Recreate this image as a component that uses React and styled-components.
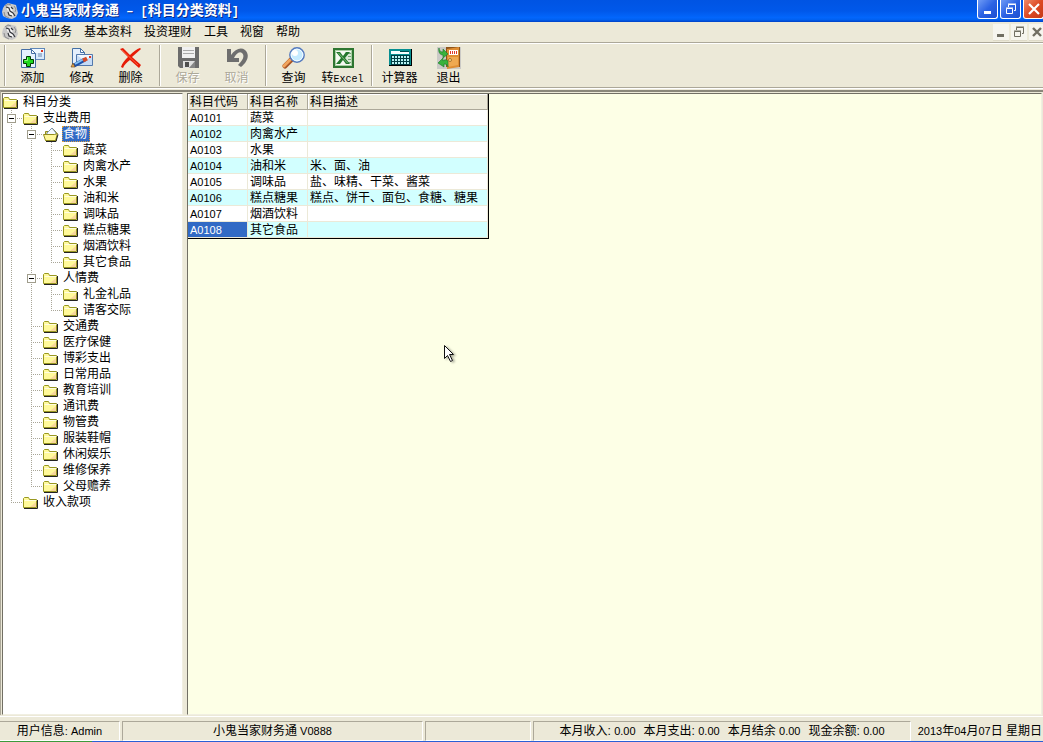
import { useState } from "react";
import styled, { createGlobalStyle, css } from "styled-components";

/* 目录树数据 */
const TREE = {
  name: "科目分类",
  children: [
    {
      name: "支出费用",
      children: [
        {
          name: "食物",
          children: [
            { name: "蔬菜" },
            { name: "肉禽水产" },
            { name: "水果" },
            { name: "油和米" },
            { name: "调味品" },
            { name: "糕点糖果" },
            { name: "烟酒饮料" },
            { name: "其它食品" },
          ],
        },
        {
          name: "人情费",
          children: [{ name: "礼金礼品" }, { name: "请客交际" }],
        },
        { name: "交通费" },
        { name: "医疗保健" },
        { name: "博彩支出" },
        { name: "日常用品" },
        { name: "教育培训" },
        { name: "通讯费" },
        { name: "物管费" },
        { name: "服装鞋帽" },
        { name: "休闲娱乐" },
        { name: "维修保养" },
        { name: "父母赡养" },
      ],
    },
    { name: "收入款项" },
  ],
};

const ROWS = [
  { code: "A0101", name: "蔬菜", desc: "" },
  { code: "A0102", name: "肉禽水产", desc: "" },
  { code: "A0103", name: "水果", desc: "" },
  { code: "A0104", name: "油和米", desc: "米、面、油" },
  { code: "A0105", name: "调味品", desc: "盐、味精、干菜、酱菜" },
  { code: "A0106", name: "糕点糖果", desc: "糕点、饼干、面包、食糖、糖果" },
  { code: "A0107", name: "烟酒饮料", desc: "" },
  { code: "A0108", name: "其它食品", desc: "" },
];

const MENUS = ["记帐业务", "基本资料", "投资理财", "工具", "视窗", "帮助"];

const TOTALS = [
  { label: "本月收入:", value: "0.00" },
  { label: "本月支出:", value: "0.00" },
  { label: "本月结余", value: "0.00" },
  { label: "现金余额:", value: "0.00" },
];

/* 图标 */
function AppIcon() {
  return (
    <svg width="16" height="16" viewBox="0 0 16 16" aria-hidden="true">
      <path d="M3 2l3-2 4 1 4 1 1 4 1 4-2 4-4 2-5-1-4-2-1-4 1-4z" fill="#c9c9c9" />
      <path d="M3 3l3-2 3 1M12 3l2 3-1 3M2 9l1 4 4 2" stroke="#8d8d8d" fill="none" />
      <path d="M5 5l2-2 3 1 1 3-1 1 2 2-1 3-3-1-2-3 1-1-2-1z" fill="#f6f6f6" />
      <path d="M4 4l3 1 1 3 3 2 2 3M9 4l2 2M6 9l1 3 3 1" stroke="#34363c" strokeWidth="1.2" fill="none" />
    </svg>
  );
}

function AddIcon() {
  return (
    <svg width="24" height="22" viewBox="0 0 24 22" aria-hidden="true">
      <rect x="9.500" y="1.500" width="14" height="11" fill="#d8e9fb" stroke="#5f87b8" />
      <path d="M10 2h13v4H10z" fill="#eff7ff" />
      <rect x="20" y="3" width="2" height="2" fill="#d8321e" />
      <path d="M17 7h4M17 9h4" stroke="#6d88ae" />
      <path d="M.500 2.500h10l4 4v14H.500z" fill="#e6f1fd" stroke="#466fa6" />
      <path d="M10.500 2.500v4h4z" fill="#fff" stroke="#466fa6" />
      <path d="M5.500 9.500h4v3h3v4h-3v3h-4v-3h-3v-4h3z" fill="#1fd81f" stroke="#003c00" />
      <path d="M6.500 10.500v3h-3" stroke="#8dff7c" fill="none" />
    </svg>
  );
}

function EditIcon() {
  return (
    <svg width="24" height="22" viewBox="0 0 24 22" aria-hidden="true">
      <path d="M2.500 1.500h8l4 4v12h-12z" fill="#e4effc" stroke="#4671a6" />
      <path d="M10.500 1.500v4h4z" fill="#fff" stroke="#4671a6" />
      <path d="M6.500 7.500h16v11h-16z" fill="#c6dcf6" stroke="#5379ac" />
      <path d="M7 8h15l-7 6z" fill="#f1f8ff" />
      <rect x="19" y="9" width="2" height="2" fill="#e2361f" />
      <path d="M4 18.500l11-6" stroke="#1e50a8" strokeWidth="4" />
      <path d="M5 17l9-5" stroke="#82c2f4" strokeWidth="2" />
      <path d="M13 13.500l4-2" stroke="#d44a28" strokeWidth="4" />
      <path d="M1 20l2-4 2 4z" fill="#edae4d" stroke="#5d371a" strokeWidth=".6" />
    </svg>
  );
}

function DeleteIcon() {
  return (
    <svg width="24" height="22" viewBox="0 0 24 22" aria-hidden="true">
      <path d="M1 2l3-1 7 7c3-3 7-6 10-7l1 1-9 8 9 8-2 3-9-8c-3 2-6 5-7 8l-2-1c1-4 4-7 7-10z" fill="#e61c08" />
      <path d="M3 3l16 15" stroke="#ff5a37" />
    </svg>
  );
}

function SaveIcon() {
  return (
    <svg width="24" height="22" viewBox="0 0 24 22" aria-hidden="true">
      <path d="M2 0h21v21H4l-2-2z" fill="#6c6c6c" />
      <rect x="6" y="0" width="13" height="11" fill="#f1f1f1" />
      <path d="M7 3.500h11M7 6.500h11" stroke="#aaa" />
      <rect x="7" y="14" width="12" height="7" fill="#e0e0e0" />
      <path d="M9 15h4v5H9z" fill="#4e4e4e" />
      <path d="M19 14v7h-6z" fill="#858585" />
    </svg>
  );
}

function UndoIcon() {
  return (
    <svg width="24" height="22" viewBox="0 0 24 22" aria-hidden="true">
      <path d="M2 2h4v6c4-6 10-8 14-5 5 4 3 12-4 17l-3-2c5-5 7-9 4-12-3-2-6 1-8 5h5v4H2z" fill="#6e6e6e" />
    </svg>
  );
}

function SearchIcon() {
  return (
    <svg width="24" height="22" viewBox="0 0 24 22" aria-hidden="true">
      <path d="M9 13l-6 6" stroke="#a65325" strokeWidth="5" strokeLinecap="round" />
      <path d="M8 13l-6 6" stroke="#f1a45d" strokeWidth="3" strokeLinecap="round" />
      <circle cx="15" cy="8" r="7.200" fill="#c5ebff" stroke="#5579bd" strokeWidth="1.400" />
      <circle cx="15" cy="8" r="5.800" fill="none" stroke="#f2fbff" />
      <ellipse cx="13" cy="6" rx="3" ry="3" fill="#fff" />
    </svg>
  );
}

function ExcelIcon() {
  return (
    <svg width="24" height="22" viewBox="0 0 24 22" aria-hidden="true">
      <rect x="3" y="2" width="19" height="18" fill="#f5faf2" stroke="#2e7631" strokeWidth="2" />
      <rect x="4.500" y="3.500" width="16" height="15" fill="none" stroke="#a9cfa4" />
      <path d="M14 5h6v12h-6z" fill="#dbe9d7" />
      <path d="M17 6.500h3M17 9.500h3M17 12.500h3M17 15.500h3" stroke="#75a677" />
      <path d="M5 5h4l3 4 3-4h4l-5 6 5 6h-4l-3-4-3 4H5l5-6z" fill="#22772c" />
      <path d="M7 6h1l9 10h-1z" fill="#84be7e" />
    </svg>
  );
}

function CalcIcon() {
  const keys = [];
  for (let r = 0; r < 3; r++) {
    for (let c = 0; c < 6; c++) {
      keys.push(<rect key={`${r}-${c}`} x={4 + c * 3} y={9 + r * 3} width="2" height="2" fill="#b8f4f4" />);
    }
  }
  return (
    <svg width="24" height="22" viewBox="0 0 24 22" aria-hidden="true">
      <rect x="1" y="2" width="23" height="17" fill="#000" />
      <rect x="1" y="2" width="22" height="16" fill="#078f91" />
      <rect x="3" y="4" width="18" height="3" fill="#f6ffff" />
      <rect x="12" y="4" width="9" height="1" fill="#014c4d" />
      <rect x="3" y="8" width="19" height="10" fill="#003d42" />
      {keys}
    </svg>
  );
}

function ExitIcon() {
  return (
    <svg width="24" height="22" viewBox="0 0 24 22" aria-hidden="true">
      <rect width="24" height="22" fill="#cbcac6" />
      <path d="M9 0h14v20H9z" fill="#8e531b" />
      <path d="M10 2l12-2v20l-12 2z" fill="#df8e34" />
      <path d="M11 10h10v8l-10 2z" fill="#efa951" />
      <rect x="12" y="3" width="9" height="5" fill="#fff" />
      <path d="M13 5.500h7" stroke="#df3b2d" strokeWidth="3" strokeDasharray="1 1" />
      <circle cx="13" cy="13" r="1.500" fill="#ffe182" stroke="#754012" strokeWidth=".6" />
      <path d="M2 1c0 3 2 4 4 4V2l5 5-5 4V8C3 8 1 5 2 1z" fill="#39b23c" stroke="#187526" strokeWidth=".6" />
      <path d="M11 14c-2-2-4-1-5 0v-3l-5 5 6 4v-3c2 0 4 1 4 3z" fill="#39b23c" stroke="#187526" strokeWidth=".6" />
    </svg>
  );
}

function FolderIcon({ open }) {
  return (
    <svg width="16" height="16" viewBox="0 0 16 16" aria-hidden="true">
      {open ? (
        <>
          <path d="M2.500 14.500v-9h3l4-3 4 4v8z" fill="#e5de72" stroke="#8f8a20" />
          <path d="M4 7l5-5 4 5v2H4z" fill="#f4f8ff" stroke="#6683aa" strokeWidth=".8" />
          <path d="M.500 8.500h11l3-1-2 7h-10z" fill="#fff79a" stroke="#918b1c" />
          <path d="M3 15.500h10l2-7" stroke="#222" fill="none" />
        </>
      ) : (
        <>
          <path d="M.500 13.500v-9l1-1h4l1 2h7v8z" fill="#fff99a" stroke="#999821" />
          <path d="M1.500 6.500h12" stroke="#fffde0" />
          <path d="M7 13l6-5v5z" fill="#f8d79b" />
          <path d="M1 14.500h13.500V6" stroke="#222" fill="none" />
        </>
      )}
    </svg>
  );
}

function MinIcon() {
  return (
    <svg width="14" height="14" viewBox="0 0 14 14" aria-hidden="true">
      <path d="M3 10.500h7" stroke="currentColor" strokeWidth="3" />
    </svg>
  );
}

function RestoreIcon() {
  return (
    <svg width="14" height="14" viewBox="0 0 14 14" aria-hidden="true">
      <path d="M4.500 5V2.500h7v6H10M4 2h8" stroke="currentColor" fill="none" />
      <path d="M2.500 6.500h6v5h-6zM2 6h7" stroke="currentColor" fill="none" />
    </svg>
  );
}

function CloseIcon({ small }) {
  return (
    <svg width="14" height="14" viewBox="0 0 14 14" aria-hidden="true">
      {small ? (
        <path d="M3 3l8 8M11 3l-8 8" stroke="currentColor" strokeWidth="2.400" />
      ) : (
        <path d="M2 2l10 10M12 2L2 12" stroke="currentColor" strokeWidth="2.200" />
      )}
    </svg>
  );
}

const TOOL_GROUPS = [
  [
    { label: "添加", icon: <AddIcon /> },
    { label: "修改", icon: <EditIcon /> },
    { label: "删除", icon: <DeleteIcon /> },
  ],
  [
    { label: "保存", icon: <SaveIcon />, disabled: true },
    { label: "取消", icon: <UndoIcon />, disabled: true },
  ],
  [
    { label: "查询", icon: <SearchIcon /> },
    { label: "转", latin: "Excel", icon: <ExcelIcon /> },
  ],
  [
    { label: "计算器", icon: <CalcIcon /> },
    { label: "退出", icon: <ExitIcon /> },
  ],
];

/*
TreeNode 组件
guides: 每一级祖先是否还有后续节点 (决定是否画竖线)
*/
function TreeNode({ node, guides, last, root, selected, onSelect }) {
  const [open, setOpen] = useState(true);
  const hasChildren = Boolean(node.children);
  const isSelected = selected === node.name;

  return (
    <li>
      <TreeRow>
        {guides.map((more, i) => (
          <Guide key={i} $kind={more ? "line" : "blank"} />
        ))}
        {!root && (
          <Guide $kind={last ? "end" : "tee"}>
            {hasChildren && (
              <Expander
                type="button"
                aria-label={node.name}
                aria-expanded={open}
                $open={open}
                onClick={() => setOpen(!open)}
              />
            )}
          </Guide>
        )}
        <FolderCell>
          <FolderIcon open={isSelected} />
        </FolderCell>
        <NodeLabel type="button" $selected={isSelected} onClick={() => onSelect(node.name)}>
          {node.name}
        </NodeLabel>
      </TreeRow>

      {hasChildren && open && (
        <TreeList>
          {node.children.map((child, i) => (
            <TreeNode
              key={child.name}
              node={child}
              guides={root ? [] : [...guides, !last]}
              last={i === node.children.length - 1}
              selected={selected}
              onSelect={onSelect}
            />
          ))}
        </TreeList>
      )}
    </li>
  );
}

export default function App() {
  const [category, setCategory] = useState("食物");
  const [current, setCurrent] = useState("A0108");

  return (
    <>
      <GlobalStyle />
      <Window>
        {/* 标题栏 */}
        <TitleBar>
          <AppIcon />
          <Title>
            小鬼当家财务通<TitleMark> – [</TitleMark>科目分类资料<TitleMark>]</TitleMark>
          </Title>
          <CaptionButtons>
            <CaptionButton type="button" aria-label="最小化"><MinIcon /></CaptionButton>
            <CaptionButton type="button" aria-label="还原"><RestoreIcon /></CaptionButton>
            <CaptionButton type="button" aria-label="关闭" $close><CloseIcon /></CaptionButton>
          </CaptionButtons>
        </TitleBar>

        {/* 菜单栏 */}
        <MenuBar>
          <AppIcon />
          <MenuItems>
            {MENUS.map((menu) => (
              <MenuItem type="button" key={menu}>{menu}</MenuItem>
            ))}
          </MenuItems>
          <ChildButtons>
            <ChildButton type="button" aria-label="最小化子窗口"><MinIcon /></ChildButton>
            <ChildButton type="button" aria-label="还原子窗口"><RestoreIcon /></ChildButton>
            <ChildButton type="button" aria-label="关闭子窗口"><CloseIcon small /></ChildButton>
          </ChildButtons>
        </MenuBar>

        {/* 工具栏 */}
        <ToolBar>
          {TOOL_GROUPS.map((group, i) => (
            <ToolGroup key={i}>
              {group.map((tool) => (
                <ToolButton type="button" key={tool.label} disabled={tool.disabled}>
                  {tool.icon}
                  <span>
                    {tool.label}
                    {tool.latin && <MonoText>{tool.latin}</MonoText>}
                  </span>
                </ToolButton>
              ))}
            </ToolGroup>
          ))}
        </ToolBar>

        {/* 左: 分类树  右: 科目表 */}
        <Workspace>
          <TreePanel>
            <TreeList>
              <TreeNode
                node={TREE}
                guides={[]}
                root
                last
                selected={category}
                onSelect={setCategory}
              />
            </TreeList>
          </TreePanel>

          <GridPanel>
            <Table>
              <colgroup>
                <CodeCol />
                <NameCol />
                <DescCol />
              </colgroup>
              <thead>
                <tr>
                  <HeadCell>科目代码</HeadCell>
                  <HeadCell>科目名称</HeadCell>
                  <HeadCell>科目描述</HeadCell>
                </tr>
              </thead>
              <tbody>
                {ROWS.map((row) => (
                  <BodyRow key={row.code} onClick={() => setCurrent(row.code)}>
                    <Cell $current={current === row.code}>
                      <Latin>{row.code}</Latin>
                    </Cell>
                    <Cell>{row.name}</Cell>
                    <Cell>{row.desc}</Cell>
                  </BodyRow>
                ))}
              </tbody>
            </Table>
          </GridPanel>
        </Workspace>

        {/* 状态栏 */}
        <StatusBar>
          <StatusCell>
            <span>用户信息<Latin>: Admin</Latin></span>
          </StatusCell>
          <StatusCell>
            <span>小鬼当家财务通<Latin> V0888</Latin></span>
          </StatusCell>
          <StatusCell />
          <StatusCell>
            {TOTALS.map((item) => (
              <span key={item.label}>
                {item.label} <Latin>{item.value}</Latin>
              </span>
            ))}
          </StatusCell>
          <DateCell>
            <Latin>2013</Latin>年<Latin>04</Latin>月<Latin>07</Latin>日 星期日
          </DateCell>
        </StatusBar>
        <TaskbarEdge />
      </Window>

      <Pointer width="12" height="20" viewBox="0 0 12 20" aria-hidden="true">
        <path d="M.500.500v13l3-3 3 6 2-1-3-6h4z" fill="#fff" stroke="#111" />
      </Pointer>
    </>
  );
}

/* 以下为样式 */

const GlobalStyle = createGlobalStyle`
  * {
    box-sizing: border-box;
  }

  body {
    margin: 0;
    background: #ece9d8;
    color: #000;
    font-family: "Liberation Sans", "Noto Sans CJK SC", sans-serif;
    font-size: 12px;
    line-height: 16px;
  }

  button {
    margin: 0;
    padding: 0;
    border: none;
    background: none;
    color: inherit;
    font: inherit;
  }

  svg {
    display: block;
    flex: none;
  }
`;

const Window = styled.div`
  display: flex;
  flex-direction: column;
  min-height: 100vh;
  background: #ece9d8;
`;

/* 西文比中文小一号 */
const Latin = styled.span`
  font-size: 11px;
  white-space: pre;
`;

const MonoText = styled.span`
  font-family: "Liberation Mono", monospace;
  font-size: 10px;
`;

/* 标题栏 */
const TitleBar = styled.header`
  display: flex;
  align-items: center;
  height: 22px;
  padding-left: 2px;
  gap: 3px;
  overflow: hidden;
  color: #fff;
  background: linear-gradient(#0054e3 0%, #0058ea 50%, #0266fc 80%, #0060f0 90%, #0040c4 100%);
`;

const Title = styled.h1`
  flex: 1;
  margin: 0;
  font-size: 14px;
  font-weight: 700;
  line-height: 16px;
  text-shadow: 1px 1px 0 #0a2a86;
  white-space: nowrap;
`;

const TitleMark = styled.span`
  font-family: "Liberation Mono", monospace;
  font-size: 12px;
  white-space: pre;
`;

const CaptionButtons = styled.div`
  display: flex;
  align-self: flex-start;
  gap: 2px;
  margin-right: -1px;
`;

const CaptionButton = styled.button`
  display: flex;
  align-items: center;
  justify-content: center;
  width: 21px;
  height: 19px;
  border: 1px solid #fff;
  border-top: none;
  border-radius: 0 0 3px 3px;
  background: ${({ $close }) =>
    $close
      ? "linear-gradient(135deg, #ee8a6a, #dd4a24 50%, #c43a18)"
      : "linear-gradient(135deg, #6f9bf5, #2b62e4 50%, #1c4fd0)"};
`;

/* 菜单栏 */
const MenuBar = styled.nav`
  display: flex;
  align-items: center;
  height: 20px;
  padding-left: 2px;
  overflow: hidden;
`;

const MenuItems = styled.div`
  display: flex;
  flex: 1;
`;

const MenuItem = styled.button`
  padding: 0 6px;
  white-space: nowrap;
`;

const ChildButtons = styled.div`
  display: flex;
  gap: 2px;
  margin-right: -2px;
  color: #706e62;
`;

const ChildButton = styled.button`
  display: flex;
  align-items: center;
  justify-content: center;
  width: 16px;
  height: 17px;
  background: #f6f5ee;
  border-bottom: 1px solid #dedac8;
`;

/* 工具栏 */
const ToolBar = styled.div`
  display: flex;
  height: 46px;
  padding: 2px 0 1px 4px;
  border-top: 1px solid #aca899;
  border-bottom: 1px solid #aca899;
  box-shadow: inset 0 1px 0 #fff, 0 1px 0 #fff;
`;

const ToolGroup = styled.div`
  display: flex;
  margin-right: 4px;
  padding-left: 3px;
  border-left: 1px solid #aca899;
  box-shadow: inset 1px 0 0 #fff;
`;

const ToolButton = styled.button`
  display: flex;
  flex-direction: column;
  align-items: center;
  gap: 1px;
  width: 49px;
  padding-top: 2px;
  white-space: nowrap;

  &:disabled {
    color: #aca899;
    text-shadow: 1px 1px 0 #fff;
  }
`;

/* 工作区 */
const sunken = css`
  border: 1px solid #f1efe2;
  border-top-color: #716f64;
  border-left-color: #716f64;
`;

const Workspace = styled.main`
  display: flex;
  flex: 1;
  gap: 4px;
  margin-top: 2px;
  padding: 1px 1px 0 1px;
  border-top: 2px solid #8a877a;
  border-left: 1px solid #aca899;
`;

const TreePanel = styled.aside`
  ${sunken}
  width: 181px;
  background: #fff;
`;

const GridPanel = styled.section`
  ${sunken}
  flex: 1;
  background: #fdffe6;
`;

/* 分类树 */
const TreeList = styled.ul`
  margin: 0;
  padding: 0;
  list-style: none;
`;

const TreeRow = styled.div`
  display: flex;
  height: 16px;
`;

const vertical = "repeating-linear-gradient(#a9a698 0 1px, transparent 1px 2px)";
const horizontal = "repeating-linear-gradient(90deg, #a9a698 0 1px, transparent 1px 2px)";

const GUIDES = {
  blank: "none",
  line: `${vertical} 8px 0 / 1px 16px no-repeat`,
  tee: `${vertical} 8px 0 / 1px 16px no-repeat, ${horizontal} 8px 8px / 12px 1px no-repeat`,
  end: `${vertical} 8px 0 / 1px 8px no-repeat, ${horizontal} 8px 8px / 12px 1px no-repeat`,
};

const Guide = styled.span`
  display: flex;
  align-items: center;
  width: 20px;
  padding: 1px 0 0 4px;
  background: ${({ $kind }) => GUIDES[$kind]};
`;

const Expander = styled.button`
  width: 9px;
  height: 9px;
  border: 1px solid #a09d8c;
  background:
    linear-gradient(#000, #000) center / 5px 1px no-repeat,
    ${({ $open }) => ($open ? "" : "linear-gradient(#000, #000) center / 1px 5px no-repeat,")}
    #fff;
`;

const FolderCell = styled.span`
  width: 19px;
`;

const NodeLabel = styled.button`
  padding: 0 3px 0 1px;
  white-space: nowrap;

  ${({ $selected }) =>
    $selected &&
    css`
      color: #fff;
      background: #316ac5;
      outline: 1px dotted #e0a040;
      outline-offset: -1px;
    `}
`;

/* 科目表 */
const Table = styled.table`
  width: 301px;
  table-layout: fixed;
  border-collapse: separate;
  border-spacing: 0;
  border-right: 1px solid #000;
  border-bottom: 1px solid #000;
`;

const CodeCol = styled.col`
  width: 60px;
`;

const NameCol = styled.col`
  width: 60px;
`;

const DescCol = styled.col`
  width: 180px;
`;

const HeadCell = styled.th`
  height: 16px;
  padding: 0 0 0 2px;
  box-shadow: inset -1px -1px 0 #aca899, inset 1px 1px 0 #fff;
  background: #ece9d8;
  font-weight: 400;
  text-align: left;
  white-space: nowrap;
`;

const BodyRow = styled.tr`
  background: #fff;

  &:nth-child(even) {
    background: #d2ffff;
  }
`;

const Cell = styled.td`
  height: 16px;
  padding: 0 0 0 2px;
  box-shadow: inset -1px -1px 0 #ece9d8;
  white-space: nowrap;

  ${({ $current }) =>
    $current &&
    css`
      color: #fff;
      background: #316ac5;
    `}
`;

/* 状态栏 */
const StatusBar = styled.footer`
  display: grid;
  grid-template-columns: 120px 301px 106px 1fr 130px;
  gap: 2px;
  height: 25px;
  margin-top: 1px;
  padding-top: 4px;
  border-top: 1px solid #fff;
`;

const StatusCell = styled.div`
  display: flex;
  align-items: center;
  justify-content: center;
  gap: 8px;
  border: 1px solid #fff;
  border-top-color: #aca899;
  border-left-color: #aca899;
  white-space: nowrap;

  &:first-child {
    border-left: none;
  }

  span {
    white-space: pre;
  }
`;

const DateCell = styled.div`
  display: flex;
  align-items: center;
  justify-content: flex-end;
  padding-right: 1px;
  white-space: pre;
`;

const TaskbarEdge = styled.div`
  height: 1px;
  background: linear-gradient(90deg, #3c9a3c 92px, #2a5fd6 92px);
`;

/* 鼠标指针浮在表格区上方 */
const Pointer = styled.svg`
  position: absolute;
  left: 444px;
  top: 345px;
  filter: drop-shadow(2px 1px 1px #0005);
  pointer-events: none;
`;
